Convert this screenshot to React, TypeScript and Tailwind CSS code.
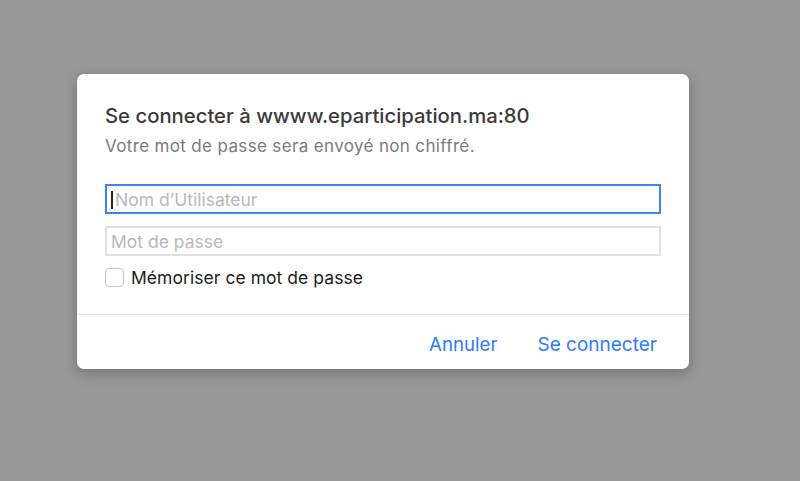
export default function App() {
  return (
    <div
      className="w-[800px] h-[481px] bg-[#989898] overflow-hidden pt-[74px] pl-[77px]"
      style={{ fontFamily: 'Inter, "Noto Sans", sans-serif' }}
    >
      <div className="w-[612px] h-[295px] bg-white rounded-[7px] shadow-[0_4px_14px_rgba(0,0,0,0.25)] flex flex-col">
        <div className="px-[28px] pt-[30px] h-[241px] border-b border-[#e3e3e3]">
          <h1 className="text-[20.3px] leading-[24px] font-medium text-[#3b3b3b]">
            Se connecter à wwww.eparticipation.ma:80
          </h1>
          <p className="mt-[8px] text-[17px] leading-[20px] tracking-[0.35px] text-[#7b7b7b]">
            Votre mot de passe sera envoyé non chiffré.
          </p>
          <div className="mt-[28px] h-[30px] border-2 border-[#3a85f7] flex items-center pl-[4px] pt-[3px]">
            <span className="w-[2px] h-[18px] bg-[#222] -mt-[2px]" />
            <span className="text-[17.5px] text-[#b9b9b9] ml-[2px]">Nom d’Utilisateur</span>
          </div>
          <div className="mt-[12px] h-[30px] border-2 border-[#e2e2e2] flex items-center pl-[4px] pt-[3px]">
            <span className="text-[17.5px] text-[#b9b9b9]">Mot de passe</span>
          </div>
          <div className="mt-[11px] flex items-center gap-[7px]">
            <span className="w-[19px] h-[19px] rounded-[4px] border border-[#c6c6c6] bg-white" />
            <span className="text-[17.5px] leading-[20px] tracking-[0.05px] text-[#1d1d1d] pt-[1px]">
              Mémoriser ce mot de passe
            </span>
          </div>
        </div>
        <div className="flex-1 flex items-center justify-end gap-[40px] pr-[32px] pt-[6px]">
          <button className="text-[18.7px] text-[#2f7cf6]">Annuler</button>
          <button className="text-[19px] text-[#2f7cf6]">Se connecter</button>
        </div>
      </div>
    </div>
  )
}
